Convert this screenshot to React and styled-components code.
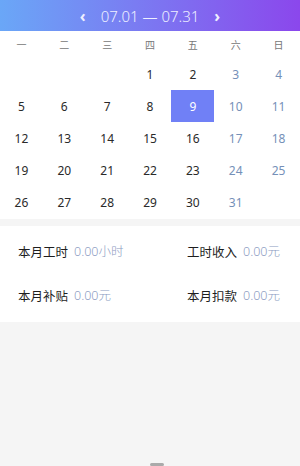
import React from 'react'
import styled, { createGlobalStyle } from 'styled-components'

const GlobalStyle = createGlobalStyle`
        html, body {
                margin: 0;
                padding: 0;
                background: #f5f5f5;
                font-family: "Noto Sans", "Noto Sans CJK SC", sans-serif;
        }
`;

const Page = styled.div`
        width: 300px;
        height: 466px;
        display: flex;
        flex-direction: column;
        background: #f5f5f5;
        overflow: hidden;
`;

const Header = styled.div`
        height: 31px;
        display: flex;
        align-items: center;
        justify-content: center;
        gap: 15px;
        background: linear-gradient(90deg, #6aa7f7 0%, #7a7cf2 45%, #8b47ec 100%);
        color: #eef0ff;
`;

const Arrow = styled.span`
        font-size: 16px;
        font-weight: 700;
        line-height: 1;
        display: flex;
        align-items: center;
`;

const Title = styled.span`
        font-size: 15px;
        font-weight: 300;
`;

const Calendar = styled.div`
        background: #fff;
        padding-bottom: 1px;
`;

const Grid = styled.div`
        display: grid;
        grid-template-columns: repeat(7, 1fr);
`;

const WeekCell = styled.div`
        height: 27px;
        display: flex;
        align-items: center;
        justify-content: center;
        font-size: 10px;
        color: #777;
        font-family: "Noto Sans CJK SC", sans-serif;
`;

const DayCell = styled.div`
        height: 32px;
        display: flex;
        align-items: center;
        justify-content: center;
        font-size: 12px;
        color: ${p => p.$selected ? '#fff' : p.$weekend ? '#7590b8' : '#2a2a2a'};
        background: ${p => p.$selected ? '#7080f6' : 'transparent'};
`;

const Gap = styled.div`
        height: 7px;
`;

const Stats = styled.div`
        background: #fff;
        height: 96px;
        display: grid;
        grid-template-columns: 1fr auto;
        align-content: center;
        row-gap: 26px;
        padding: 0 20px 0 18px;
`;

const Stat = styled.div`
        display: flex;
        align-items: center;
        gap: 6px;
        font-size: 12.5px;
        line-height: 18px;
`;

const Label = styled.span`
        color: #1e1e1e;
        font-family: "Noto Sans CJK SC", sans-serif;
`;

const Value = styled.span`
        color: #8b9bc2;
        font-family: "Noto Sans", "Noto Sans CJK SC", sans-serif;
        font-weight: 300;
`;

const Spacer = styled.div`
        flex: 1;
`;

const BottomMark = styled.div`
        height: 5px;
        display: flex;
        justify-content: center;
        margin-left: 14px;
        &::before {
                content: '';
                width: 14px;
                height: 3px;
                margin-top: 2px;
                background: #aaa;
                border-radius: 2px;
        }
`;

const weekDays = ['一', '二', '三', '四', '五', '六', '日'];

export default function App() {
        const cells = [];
        for (let i = 0; i < 3; i++) cells.push(null);
        for (let d = 1; d <= 31; d++) cells.push(d);

        return (
                <Page>
                        <GlobalStyle />
                        <Header>
                                <Arrow>‹</Arrow>
                                <Title>07.01 — 07.31</Title>
                                <Arrow>›</Arrow>
                        </Header>
                        <Calendar>
                                <Grid>
                                        {weekDays.map(w => <WeekCell key={w}>{w}</WeekCell>)}
                                        {cells.map((d, i) => (
                                                <DayCell key={i} $weekend={i % 7 >= 5} $selected={d === 9}>
                                                        {d}
                                                </DayCell>
                                        ))}
                                </Grid>
                        </Calendar>
                        <Gap />
                        <Stats>
                                <Stat><Label>本月工时</Label><Value>0.00小时</Value></Stat>
                                <Stat><Label>工时收入</Label><Value>0.00元</Value></Stat>
                                <Stat><Label>本月补贴</Label><Value>0.00元</Value></Stat>
                                <Stat><Label>本月扣款</Label><Value>0.00元</Value></Stat>
                        </Stats>
                        <Spacer />
                        <BottomMark />
                </Page>
        )
}
